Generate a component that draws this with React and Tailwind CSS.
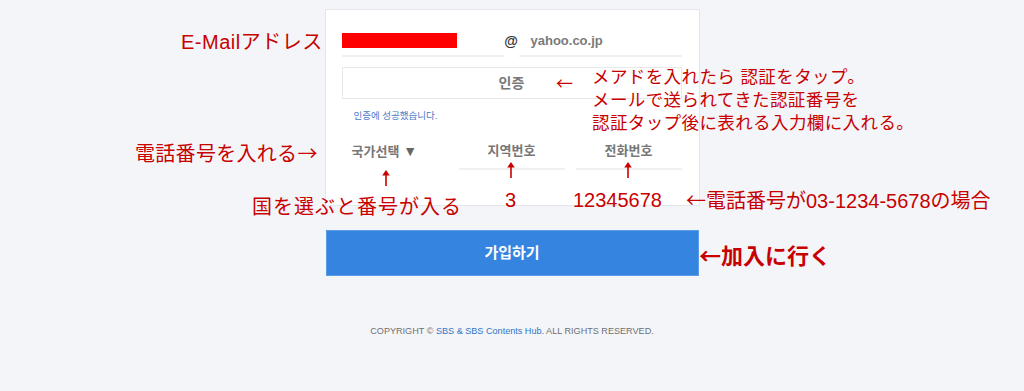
import React from "react";

// Red note text laid over the signup form
const Note = ({ className = "", children }) => (
  <div
    className={`absolute whitespace-nowrap text-[#c80000] ${className}`}
    style={{ fontFamily: '"Liberation Sans", "Noto Sans CJK JP", sans-serif' }}
  >
    {children}
  </div>
);

// full-width arrow glyph
const Arr = ({ children }) => <span style={{ fontFamily: '"Noto Sans CJK JP", sans-serif' }}>{children}</span>;

const UpArrow = ({ className = "" }) => (
  <svg width="10" height="16" viewBox="0 0 10 16" className={`absolute ${className}`}>
    <path d="M5 4 L5 16" stroke="#c80000" strokeWidth="1.6" />
    <path d="M5 0 L1.2 5.5 L8.8 5.5 Z" fill="#c80000" />
  </svg>
);

const kr = { fontFamily: '"Liberation Sans", "Noto Sans CJK KR", sans-serif' };

const App = () => {
  return (
    <div className="relative w-[1024px] h-[391px] bg-[#f4f5f9] overflow-hidden" style={kr}>
      <div className="flex flex-col items-center pt-[9px]">
        {/* form card */}
        <div className="w-[375px] h-[197px] bg-white border border-[#e4e6eb] px-[16px] pt-[16px]">
          {/* email row */}
          <div className="flex h-[31px]">
            <div className="w-[162px] h-full flex items-center border-b-2 border-[#f0f0f0]">
              <div className="w-[115px] h-[15px] bg-[#ff0000]" />
            </div>
            <div className="w-[15px] h-full flex items-center justify-center text-[14px] font-bold text-[#333]">@</div>
            <div className="w-[163px] h-full flex items-center border-b-2 border-[#f0f0f0] pl-[12px] text-[13px] font-bold text-[#7a7a7a]">
              yahoo.co.jp
            </div>
          </div>
          {/* verify button */}
          <div className="mt-[10px] w-[340px] h-[32px] border border-[#e8e8e8] flex items-center justify-center text-[14px] font-bold text-[#777]">
            인증
          </div>
          <div className="mt-[12px] pl-[12px] text-[9.5px] leading-none text-[#4a78c8]">인증에 성공했습니다.</div>
          {/* phone row */}
          <div className="mt-[17px] flex gap-[11px]">
            <div className="w-[106px] h-[32px] flex items-center gap-[4px] pb-[4px] pl-[10px] text-[13px] font-bold text-[#777]">
              국가선택 <span className="text-[14px] text-[#666]">▼</span>
            </div>
            <div className="w-[106px] h-[32px] flex items-center justify-center pb-[4px] border-b-2 border-[#f0f0f0] text-[13px] font-bold text-[#777]">
              지역번호
            </div>
            <div className="w-[106px] h-[32px] flex items-center justify-center pb-[4px] border-b-2 border-[#f0f0f0] text-[13px] font-bold text-[#777]">
              전화번호
            </div>
          </div>
        </div>

        {/* submit */}
        <button className="mt-[24px] w-[373px] h-[46px] bg-[#3584e0] border border-[#5a9be6] text-white text-[15px] font-bold">
          가입하기
        </button>

        <div className="mt-[49px] text-[9.1px] text-[#6f6f6f]">
          COPYRIGHT © <span className="text-[#2f74c8]">SBS &amp; SBS Contents Hub.</span> ALL RIGHTS RESERVED.
        </div>
      </div>

      {/* annotations */}
      <Note className="left-[181px] top-[29px] text-[20px] leading-[26px] tracking-[0.5px]">E-Mailアドレス</Note>
      <Note className="left-[556px] top-[71px] text-[17px] leading-[24px]">
        <Arr>←</Arr>
      </Note>
      <Note className="left-[592px] top-[66px] text-[17.5px] leading-[23px] tracking-[0.4px]">
        メアドを入れたら 認証をタップ。
        <br />
        メールで送られてきた認証番号を
        <br />
        認証タップ後に表れる入力欄に入れる。
      </Note>
      <Note className="left-[135px] top-[140px] text-[20px] leading-[26px] tracking-[0.3px]">
        電話番号を入れる<Arr>→</Arr>
      </Note>
      <UpArrow className="left-[381px] top-[170px]" />
      <UpArrow className="left-[506px] top-[162px]" />
      <UpArrow className="left-[623px] top-[162px]" />
      <Note className="left-[252px] top-[194px] text-[20px] leading-[26px] tracking-[1px]">国を選ぶと番号が入る</Note>
      <Note className="left-[505px] top-[187px] text-[20px] leading-[26px]">3</Note>
      <Note className="left-[573px] top-[187px] text-[20px] leading-[26px]">12345678</Note>
      <Note className="left-[686px] top-[187px] text-[20px] leading-[26px]">
        <Arr>←</Arr>電話番号が03-1234-5678の場合
      </Note>
      <Note className="left-[699px] top-[240px] text-[22px] leading-[28px] font-bold">
        <Arr>←</Arr>加入に行く
      </Note>
    </div>
  );
};

export default App;
